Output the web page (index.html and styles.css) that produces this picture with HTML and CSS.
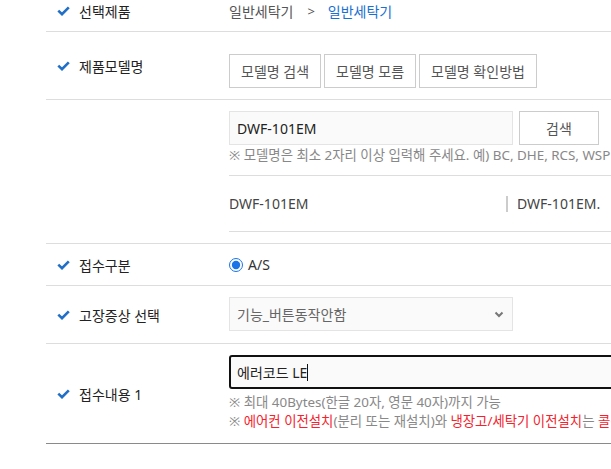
FILE: index.html
```html
<!DOCTYPE html>
<html lang="ko">
<head>
    <meta charset="UTF-8">
    <meta name="viewport" content="width=device-width, initial-scale=1.0">
    <title>서비스 접수</title>
    <link rel="stylesheet" href="styles.css">
</head>
<body>

<div class="form">
    <!-- 선택제품 -->
    <div class="row row-product">
        <div class="label">
            <svg class="check" width="13" height="10" viewBox="0 0 13 10"><path d="M1.3 4.6 L5 8.2 L11.8 1.4" fill="none" stroke="#1f6fc9" stroke-width="2.6"/></svg>
            <span>선택제품</span>
        </div>
        <div class="value">
            <span class="crumb">일반세탁기</span>
            <span class="crumb-sep">&gt;</span>
            <span class="crumb crumb-on">일반세탁기</span>
        </div>
    </div>

    <!-- 제품모델명 -->
    <div class="row row-model">
        <div class="label">
            <svg class="check" width="13" height="10" viewBox="0 0 13 10"><path d="M1.3 4.6 L5 8.2 L11.8 1.4" fill="none" stroke="#1f6fc9" stroke-width="2.6"/></svg>
            <span>제품모델명</span>
        </div>
        <div class="value buttons">
            <button class="btn">모델명 검색</button>
            <button class="btn">모델명 모름</button>
            <button class="btn">모델명 확인방법</button>
        </div>
    </div>

    <!-- 모델명 검색 -->
    <div class="row row-search">
        <div class="label"></div>
        <div class="value">
            <div class="search">
                <input class="field search-input" type="text" value="DWF-101EM">
                <button class="btn search-btn">검색</button>
            </div>
            <p class="hint">※ 모델명은 최소 2자리 이상 입력해 주세요. 예) BC, DHE, RCS, WSP</p>
            <ul class="results">
                <li class="result">DWF-101EM</li>
                <li class="result result-alt">DWF-101EM.</li>
            </ul>
        </div>
    </div>

    <!-- 접수구분 -->
    <div class="row row-type">
        <div class="label">
            <svg class="check" width="13" height="10" viewBox="0 0 13 10"><path d="M1.3 4.6 L5 8.2 L11.8 1.4" fill="none" stroke="#1f6fc9" stroke-width="2.6"/></svg>
            <span>접수구분</span>
        </div>
        <div class="value">
            <label class="radio"><input type="radio" name="type" checked> A/S</label>
        </div>
    </div>

    <!-- 고장증상 선택 -->
    <div class="row row-symptom">
        <div class="label">
            <svg class="check" width="13" height="10" viewBox="0 0 13 10"><path d="M1.3 4.6 L5 8.2 L11.8 1.4" fill="none" stroke="#1f6fc9" stroke-width="2.6"/></svg>
            <span>고장증상 선택</span>
        </div>
        <div class="value">
            <div class="select-wrap">
                <select class="field select">
                    <option>기능_버튼동작안함</option>
                </select>
                <svg class="chevron" width="10" height="7" viewBox="0 0 10 7"><path d="M1.5 1.5 L5 5 L8.5 1.5" fill="none" stroke="#777" stroke-width="2"/></svg>
            </div>
        </div>
    </div>

    <!-- 접수내용 -->
    <div class="row row-content">
        <div class="label">
            <svg class="check" width="13" height="10" viewBox="0 0 13 10"><path d="M1.3 4.6 L5 8.2 L11.8 1.4" fill="none" stroke="#1f6fc9" stroke-width="2.6"/></svg>
            <span>접수내용 1</span>
        </div>
        <div class="value">
            <div class="field memo">에러코드 LE<span class="caret"></span></div>
            <p class="hint">※ 최대 40Bytes(한글 20자, 영문 40자)까지 가능</p>
            <p class="hint">※ <em>에어컨 이전설치</em>(분리 또는 재설치)와 <em>냉장고/세탁기 이전설치</em>는 <em>콜센터로 문의해 주세요.</em></p>
        </div>
    </div>
</div>

</body>
</html>
```

FILE: styles.css
```css
body {
    margin: 0;
    padding: 0;
    overflow: hidden;
    background: #fff;
    font-family: "Noto Sans", "Noto Sans CJK KR", sans-serif;
    font-size: 14px;
    color: #222;
}
.form {
    margin: -9px 0 0 46px;
    width: 760px;
}
.row {
    display: flex;
    align-items: center;
    border-bottom: 1px solid #ddd;
}
.row-content {
    border-bottom-color: #8a8a8a;
}
.label {
    flex: none;
    width: 172px;
    padding-left: 11px;
    display: flex;
    align-items: center;
    gap: 9px;
    font-size: 14px;
    color: #222;
}
.value {
    flex: 1;
    min-width: 0;
}

/* 선택제품 */
.row-product .value {
    height: 40px;
    display: flex;
    align-items: center;
    color: #555;
}
.crumb-sep {
    margin: 0 13px 0 14px;
    font-size: 13px;
}
.crumb-on {
    color: #1a6fd2;
}

/* buttons */
.btn {
    font-family: inherit;
    font-size: 14px;
    color: #555;
    background: #fff;
    border: 1px solid #ccc;
    height: 34px;
    padding: 0 11px;
    cursor: pointer;
}
.buttons {
    display: flex;
    gap: 3px;
    padding: 22px 0 11px;
}

/* 모델명 검색 */
.row-search .value {
    padding: 11px 0 11px;
}
.search {
    display: flex;
    gap: 6px;
}
.field {
    box-sizing: border-box;
    height: 34px;
    background: #fafafa;
    border: 1px solid #e4e4e4;
    font-family: inherit;
    font-size: 14px;
    color: #222;
    padding: 0 7px;
    outline: none;
}
.search-input {
    width: 284px;
}
.search-btn {
    width: 80px;
}
.hint {
    margin: 0;
    font-size: 13.4px;
    line-height: 20px;
    color: #888;
    white-space: nowrap;
}
.hint em {
    font-style: normal;
    color: #f5222d;
}
.results {
    list-style: none;
    margin: 10px 0 0;
    padding: 0;
    height: 55px;
    display: flex;
    align-items: center;
    border-top: 1px solid #ddd;
    border-bottom: 1px solid #ddd;
    color: #444;
}
.result {
    width: 277px;
}
.result-alt::before {
    content: "";
    display: inline-block;
    width: 2px;
    height: 16px;
    background: #ccc;
    margin-right: 9px;
    vertical-align: -3px;
}

/* 접수구분 */
.row-type .value {
    height: 41px;
    display: flex;
    align-items: center;
}
.radio {
    display: flex;
    align-items: center;
    gap: 5px;
    color: #333;
}
.radio input {
    margin: 0;
    width: 14px;
    height: 14px;
    accent-color: #1a73e8;
}

/* 고장증상 */
.row-symptom .value {
    padding: 11px 0 12px;
}
.select-wrap {
    position: relative;
    width: 284px;
}
.select {
    width: 284px;
    appearance: none;
    color: #666;
}
.chevron {
    position: absolute;
    right: 9px;
    top: 14px;
}

/* 접수내용 */
.row-content .value {
    padding: 11px 0 12px;
}
.memo {
    width: 440px;
    border: 2px solid #111;
    border-radius: 3px;
    display: flex;
    align-items: center;
    padding: 0 6px;
    margin-bottom: 4px;
}
.caret {
    display: inline-block;
    width: 1px;
    height: 17px;
    background: #111;
}
.row-content .hint {
    line-height: 19px;
}
```
